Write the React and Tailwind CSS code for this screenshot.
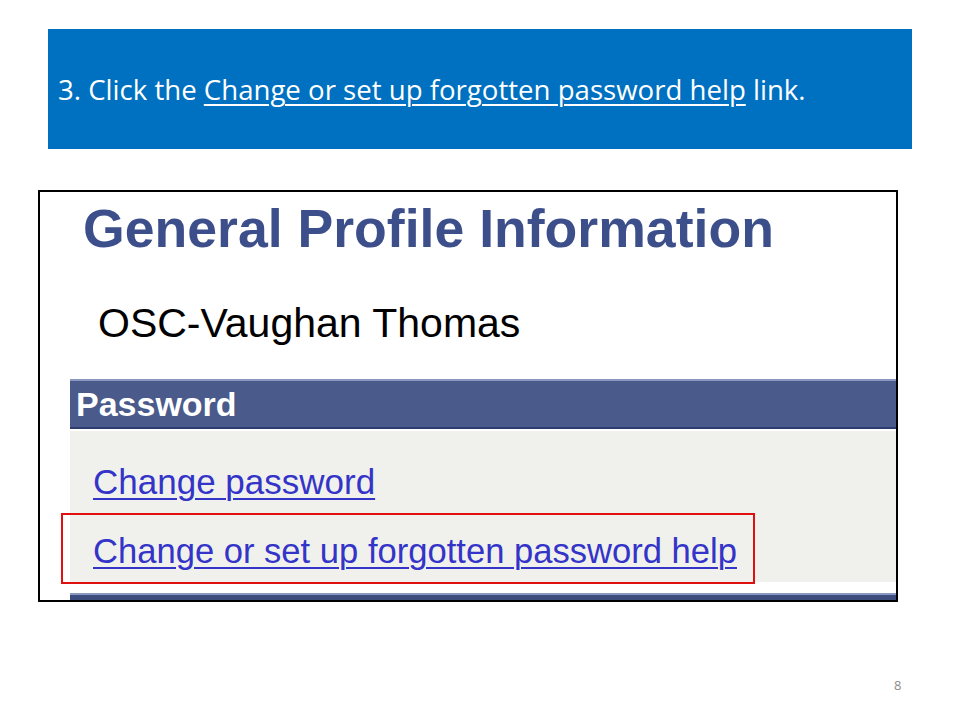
export default function App() {
  return (
    <div className="w-[960px] h-[720px] bg-white relative overflow-hidden">
      <div className="pt-[29px] px-[48px]">
        <div className="h-[120px] bg-[#0070c0] flex items-center pl-[10px]">
          <p className="mt-[2px] text-white text-[27.6px] leading-none" style={{ fontFamily: "'Open Sans', Lato, sans-serif" }}>
            3. Click the{" "}
            <span className="underline decoration-[2px] underline-offset-[4px]">Change or set up forgotten password help</span>{" "}
            link.
          </p>
        </div>
      </div>

      <div className="ml-[38px] mt-[41px] w-[860px] h-[412px] border-2 border-black overflow-hidden bg-white relative" style={{ fontFamily: "'Liberation Sans', Arial, sans-serif" }}>
        <h1 className="mt-[10px] ml-[43px] text-[53.6px] leading-none font-bold text-[#3d4f8b] whitespace-nowrap">
          General Profile Information
        </h1>
        <p className="mt-[47px] ml-[58px] text-[41px] leading-none text-black whitespace-nowrap">OSC-Vaughan Thomas</p>
        <div className="ml-[30px] mt-[35px]">
          <div className="h-[50px] bg-[#4a5a8b] border-t-2 border-t-[#8a98c0] border-b-2 border-b-[#2e3d6e] flex items-center pl-[6px]">
            <span className="text-white font-bold text-[34px] leading-none">Password</span>
          </div>
          <div className="mt-[2px] bg-[#f0f1ed] pt-[33px] pb-[14px] pl-[23px]">
            <a className="block w-fit text-[35px] leading-none text-[#3434c8] underline decoration-[2px] underline-offset-[4px] whitespace-nowrap">Change password</a>
            <a className="block w-fit mt-[35px] text-[34.6px] leading-none text-[#3434c8] underline decoration-[2px] underline-offset-[4px] whitespace-nowrap">Change or set up forgotten password help</a>
          </div>
          <div className="mt-[11px] h-[10px] bg-[#3d4c7e] border-t-2 border-t-[#8a98c0]"></div>
        </div>
        <div className="absolute left-[21px] top-[321px] w-[694px] h-[71px] border-2 border-[#e01010]"></div>
      </div>

      <div className="absolute left-[894px] top-[679px] text-[13px] text-[#8c8c8c] leading-none" style={{ fontFamily: "'Open Sans', sans-serif" }}>8</div>
    </div>
  );
}
